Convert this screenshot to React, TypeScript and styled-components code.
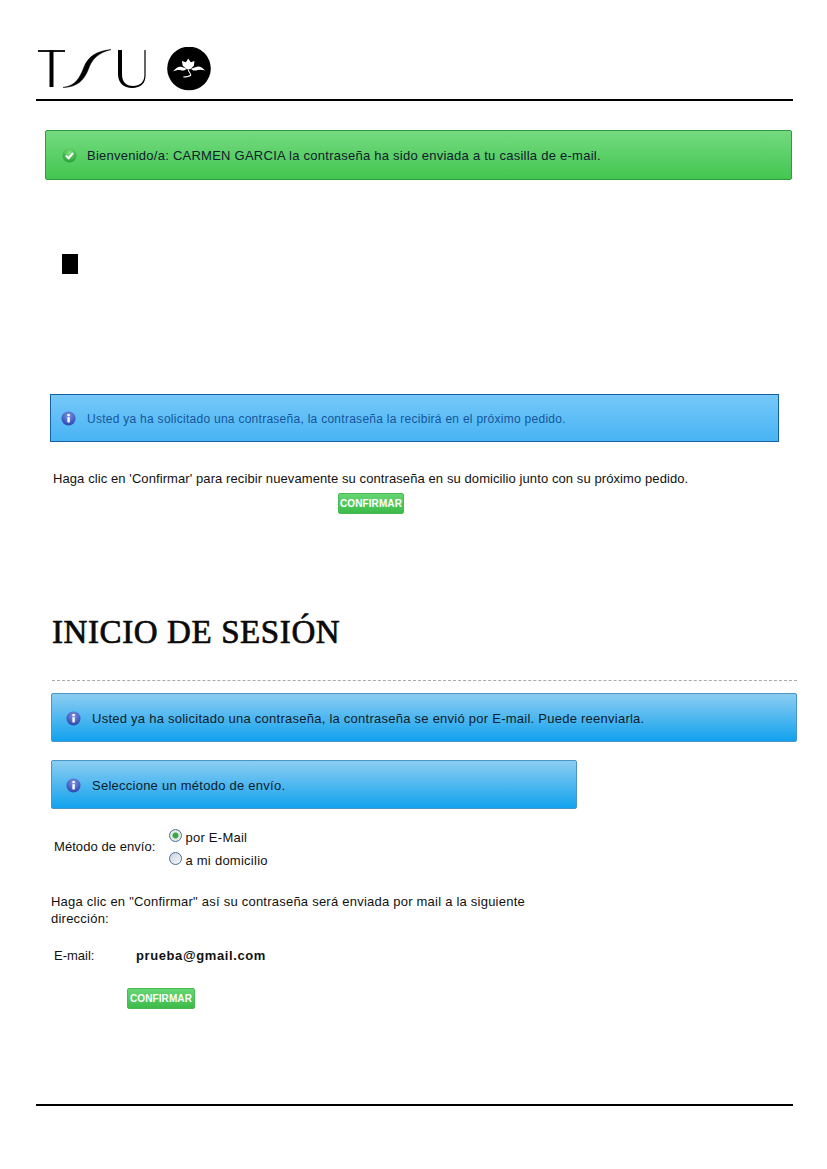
import React from "react";
import styled, { createGlobalStyle } from "styled-components";

const Global = createGlobalStyle`
  html, body { margin: 0; padding: 0; background: #fff; }
  body { font-family: "Liberation Sans", Arial, sans-serif; color: #111; }
`;

const Page = styled.div`
  width: 827px;
  height: 1169px;
  overflow: hidden;
  display: flex;
  flex-direction: column;
`;

const Header = styled.header`
  margin: 0 34px 0 36px;
  height: 101px;
  box-sizing: border-box;
  padding: 47px 0 0 2px;
  border-bottom: 2px solid #000;
`;

type Tone = "green" | "sky" | "blue";

const Alert = styled.div<{ $tone: Tone; $left: number; $width: number; $top: number; $height: number }>`
  box-sizing: border-box;
  margin-left: ${(p) => p.$left}px;
  margin-top: ${(p) => p.$top}px;
  width: ${(p) => p.$width}px;
  height: ${(p) => p.$height}px;
  display: flex;
  align-items: center;
  gap: ${(p) => (p.$tone === "green" ? 10 : 11)}px;
  padding-left: ${(p) => (p.$tone === "green" ? 16 : p.$tone === "sky" ? 10 : 14)}px;
  padding-top: ${(p) => (p.$tone === "green" ? 0 : 1)}px;
  font-size: ${(p) => (p.$tone === "sky" ? 12 : 13)}px;
  letter-spacing: ${(p) => (p.$tone === "sky" ? 0.27 : 0.25)}px;
  border-radius: ${(p) => (p.$tone === "sky" ? 0 : 2)}px;
  border: 1px solid ${(p) => (p.$tone === "green" ? "#2f9a3f" : p.$tone === "sky" ? "#17609f" : "#4a94c8")};
  color: ${(p) => (p.$tone === "sky" ? "#14569a" : "#10202c")};
  background: ${(p) =>
    p.$tone === "green"
      ? "linear-gradient(#74da80, #43c650)"
      : p.$tone === "sky"
      ? "linear-gradient(#76c8f8, #48b4f5)"
      : "linear-gradient(#8ccdf1, #12a2ee)"};
`;

const Square = styled.div`
  margin: 74px 0 0 62px;
  width: 16px;
  height: 20px;
  background: #000;
`;

const Para = styled.p<{ $left: number; $top: number; $width?: number; $spacing: number }>`
  margin: ${(p) => p.$top}px 0 0 ${(p) => p.$left}px;
  ${(p) => (p.$width ? `width: ${p.$width}px;` : "")}
  font-size: 13px;
  line-height: 17px;
  letter-spacing: ${(p) => p.$spacing}px;
  color: #111;
`;

const Button = styled.button<{ $left: number; $top: number; $width: number }>`
  display: block;
  margin: ${(p) => p.$top}px 0 0 ${(p) => p.$left}px;
  width: ${(p) => p.$width}px;
  height: 21px;
  padding: 0;
  border: 1px solid #49b956;
  border-radius: 2px;
  background: linear-gradient(#66d672, #3dbb4a);
  color: #fff;
  font: bold 10px "Liberation Sans", Arial, sans-serif;
  letter-spacing: 0.1px;
`;

const Title = styled.h1`
  margin: 98px 0 0 52px;
  font: 400 33px/40px "Liberation Serif", "Times New Roman", serif;
  text-transform: uppercase;
  letter-spacing: 0.6px;
  -webkit-text-stroke: 0.7px #0a0a0a;
  color: #0a0a0a;
  white-space: nowrap;
`;

const Rule = styled.div`
  margin: 28px 0 0 52px;
  width: 745px;
  border-top: 1px dashed #aaa;
`;

const MethodRow = styled.div`
  margin: 20px 0 0 54px;
  display: flex;
  align-items: flex-start;
  gap: 14px;
  font-size: 13px;
  letter-spacing: 0.06px;
`;

const MethodLabel = styled.span`
  padding-top: 10px;
`;

const Options = styled.div`
  display: flex;
  flex-direction: column;
  gap: 6px;
  letter-spacing: 0.26px;
`;

const Option = styled.label`
  display: flex;
  align-items: center;
  gap: 3px;
  height: 17px;
`;

const Radio = styled.span<{ $on?: boolean }>`
  width: 13px;
  height: 13px;
  box-sizing: border-box;
  border-radius: 50%;
  border: 1px solid #4a6f96;
  background: ${(p) =>
    p.$on
      ? "radial-gradient(circle, #3fa648 0 2.5px, #e4ece4 3.5px)"
      : "linear-gradient(135deg, #c9d3de, #f6f8fa)"};
  margin-top: -4px;
`;

const EmailRow = styled.div`
  margin: 20px 0 0 54px;
  display: flex;
  align-items: center;
  font-size: 13px;
  height: 17px;
`;

const EmailLabel = styled.span`
  width: 82px;
`;

const EmailValue = styled.strong`
  font-size: 13px;
  letter-spacing: 0.6px;
`;

const Footer = styled.div`
  margin: 95px 34px 0 36px;
  border-top: 2px solid #000;
`;

const Logo = () => (
  <svg width="176" height="44" viewBox="0 0 176 44" fill="none" aria-label="TSU logo">
    <path d="M0 4H27" stroke="#000" strokeWidth="1.8" />
    <path d="M13.5 3V40" stroke="#000" strokeWidth="4" />
    <path
      d="M25 40.5C38 39 42 30 46 20C50 10 58 4 73 2.6C60 6 54 12 50.5 22C46 33 40 40 25 40.5Z"
      fill="#000"
      stroke="#000"
      strokeWidth="0.5"
    />
    <path
      d="M80 3H84V27C84 35 88 39 95 39C102 39 106.4 35 106.4 28V3H107.6V28C107.6 36 103 41 94 41C86 41 80 36 80 27Z"
      fill="#000"
    />
    <circle cx="151" cy="21.5" r="21.8" fill="#000" />
    <path
      d="M150.3 11.5l2.4 3.8 3.8-1.2-.6 4.6-3.6 3.6h-3.6l-4-3.6-.8-4.6 4 1.2z"
      fill="#fff"
    />
    <path d="M135 24.5c3-4 6-5.5 9-4.5l4.5 1.8c-1 1.5-3 2.2-5 1.6-3-.8-5.5-.2-8.5 1.1z" fill="#fff" />
    <path d="M167 23.5c-3-3.5-6-5-9-3.6l-5 1.9c1 1.5 3 2.2 5 1.6 3-.8 6-.7 9 .1z" fill="#fff" />
    <path d="M150.3 22.5c0 2.5 2.4 3.5 2.4 5.8-2 1.5-4.6 1.7-7.4 1.7" stroke="#fff" strokeWidth="1.1" />
  </svg>
);

const InfoIcon = () => (
  <svg width="15" height="15" viewBox="0 0 15 15">
    <defs>
      <radialGradient id="ib" cx="50%" cy="30%" r="75%">
        <stop offset="0" stopColor="#7d93e6" />
        <stop offset="1" stopColor="#2342a8" />
      </radialGradient>
    </defs>
    <circle cx="7.5" cy="7.5" r="7" fill="url(#ib)" />
    <rect x="6.4" y="6.2" width="2.4" height="5.2" fill="#fff" />
    <rect x="6.4" y="3" width="2.4" height="2.2" fill="#fff" />
  </svg>
);

const CheckIcon = () => (
  <svg width="15" height="15" viewBox="0 0 15 15">
    <defs>
      <radialGradient id="cg" cx="50%" cy="30%" r="75%">
        <stop offset="0" stopColor="#7fe07f" />
        <stop offset="1" stopColor="#1f9a2e" />
      </radialGradient>
    </defs>
    <circle cx="7.5" cy="7.5" r="7" fill="url(#cg)" />
    <path d="M4 7.6l2.6 2.6L11 5" fill="none" stroke="#fff" strokeWidth="2" />
  </svg>
);

export default function App() {
  return (
    <Page>
      <Global />
      <Header>
        <Logo />
      </Header>
      <Alert $tone="green" $left={45} $width={747} $top={29} $height={50}>
        <CheckIcon />
        <span>Bienvenido/a: CARMEN GARCIA la contraseña ha sido enviada a tu casilla de e-mail.</span>
      </Alert>
      <Square />
      <Alert $tone="sky" $left={50} $width={729} $top={120} $height={48}>
        <InfoIcon />
        <span>Usted ya ha solicitado una contraseña, la contraseña la recibirá en el próximo pedido.</span>
      </Alert>
      <Para $left={53} $top={28} $spacing={0.09}>
        Haga clic en 'Confirmar' para recibir nuevamente su contraseña en su domicilio junto con su próximo pedido.
      </Para>
      <Button $left={338} $top={6} $width={66}>CONFIRMAR</Button>
      <Title>Inicio de Sesión</Title>
      <Rule />
      <Alert $tone="blue" $left={51} $width={746} $top={12} $height={49}>
        <InfoIcon />
        <span>Usted ya ha solicitado una contraseña, la contraseña se envió por E-mail. Puede reenviarla.</span>
      </Alert>
      <Alert $tone="blue" $left={51} $width={526} $top={18} $height={49}>
        <InfoIcon />
        <span>Seleccione un método de envío.</span>
      </Alert>
      <MethodRow>
        <MethodLabel>Método de envío:</MethodLabel>
        <Options>
          <Option><Radio $on />por E-Mail</Option>
          <Option><Radio />a mi domicilio</Option>
        </Options>
      </MethodRow>
      <Para $left={51} $top={24} $width={490} $spacing={0.23}>
        Haga clic en "Confirmar" así su contraseña será enviada por mail a la siguiente dirección:
      </Para>
      <EmailRow>
        <EmailLabel>E-mail:</EmailLabel>
        <EmailValue>prueba@gmail.com</EmailValue>
      </EmailRow>
      <Button $left={127} $top={24} $width={68}>CONFIRMAR</Button>
      <Footer />
    </Page>
  );
}
